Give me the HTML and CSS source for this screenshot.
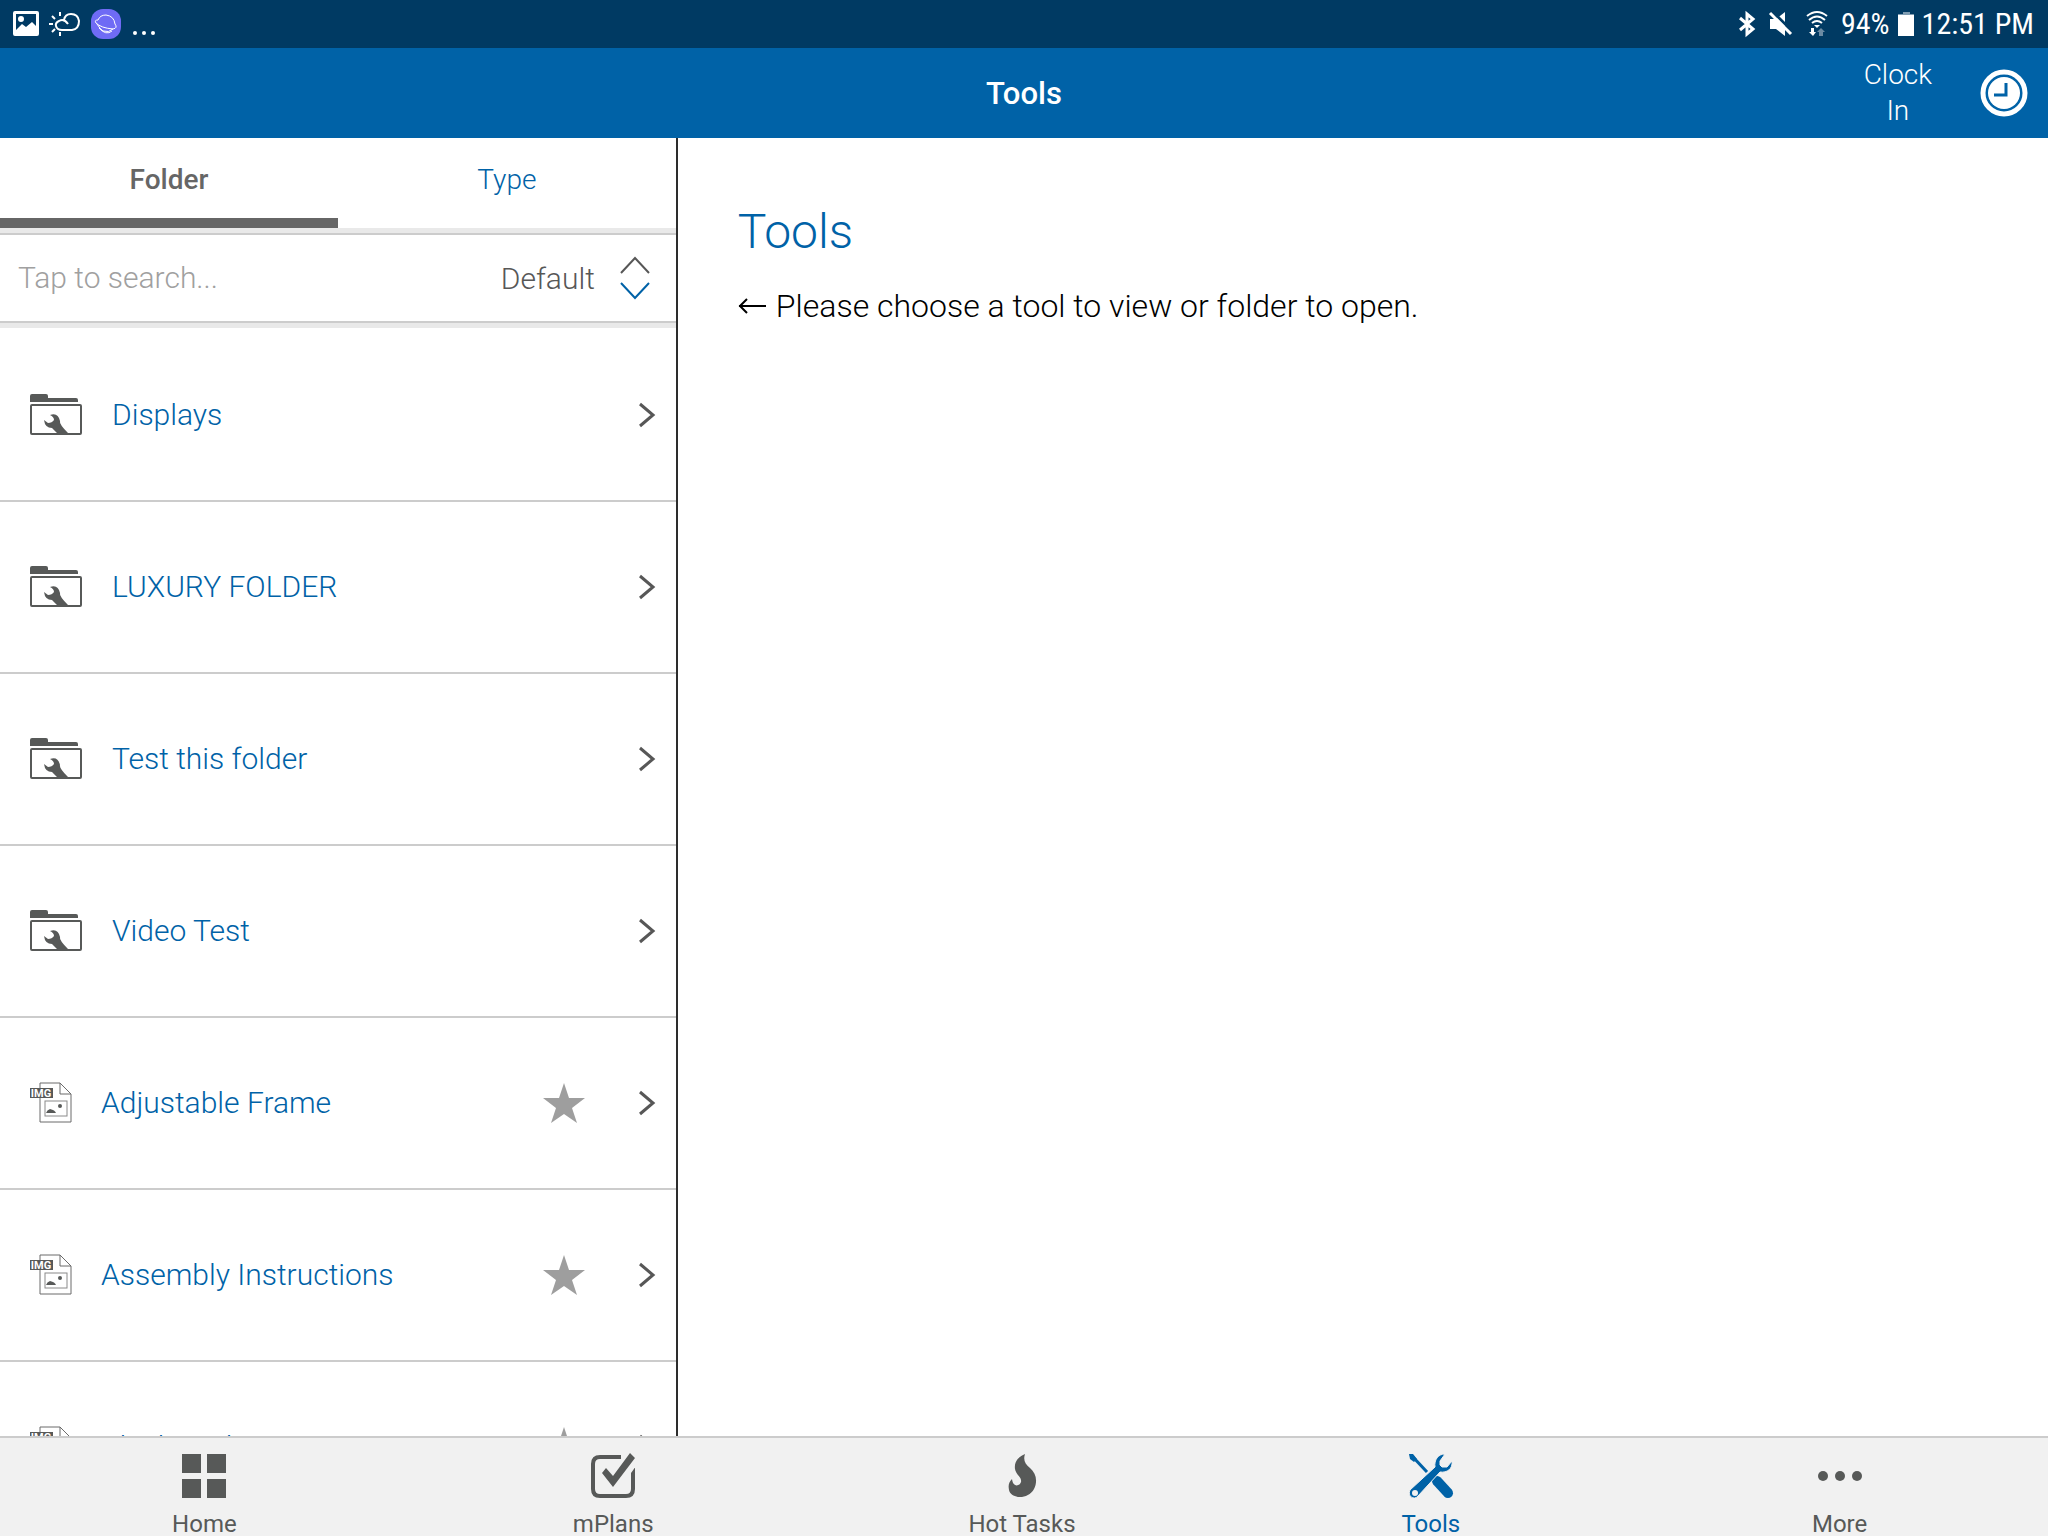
FILE: index.html
```html
<!DOCTYPE html>
<html lang="en">

<head>
    <meta charset="UTF-8">
    <meta name="viewport" content="width=device-width, initial-scale=1">
    <title>Tools</title>
    <link rel="stylesheet" href="styles.css">
</head>

<body>
    <!-- Shared icons -->
    <svg class="sprite" aria-hidden="true">
        <symbol id="icon-folder" viewBox="0 0 52 42">
            <path d="M0 8V2Q0 0 2 0H16Q18 0 18 2V4H46Q48 4 48 6V8Z" fill="#575958" />
            <rect x="1" y="11" width="50" height="29" rx="1" fill="none" stroke="#575958" stroke-width="2" />
            <path d="M20 21Q28 18 30 27Q29 30 38 39H27L22 34Q15 34 14 26L18 29Q22 29 24 26Q24 23 20 21Z" fill="#575958" />
        </symbol>
        <symbol id="icon-img" viewBox="0 0 42 42">
            <path d="M10 1H30L41 12V40H10Z M30 1V12H41" fill="none" stroke="#6b6b6b" stroke-width="1" />
            <rect x="15" y="19" width="22" height="15" fill="none" stroke="#8a8a8a" stroke-width="1" />
            <path d="M16 31Q17 28 20 27Q25 28 26 31Z" fill="#575958" />
            <circle cx="30" cy="24" r="2" fill="#575958" />
            <rect x="0" y="6" width="23" height="10" fill="#575958" />
            <text x="11" y="15" text-anchor="middle" class="img-tag">IMG</text>
        </symbol>
        <symbol id="icon-star" viewBox="0 0 42 40">
            <path d="M21 0L26 15H42L29 25L34 40L21 31L8 40L13 25L0 15H16Z" fill="#9e9e9e" />
        </symbol>
        <symbol id="icon-next" viewBox="0 0 18 26">
            <path d="M2 2L15 13L2 24" fill="none" stroke="#575757" stroke-width="3" />
        </symbol>
    </svg>

    <!-- Device status bar -->
    <div class="status-bar">
        <div class="status-left">
            <svg width="26" height="26" viewBox="0 0 26 26">
                <path fill="#fff" fill-rule="evenodd" d="M2 0H24Q26 0 26 2V23Q26 25 24 25H2Q0 25 0 23V2Q0 0 2 0ZM3 19L9 13L13 16L19 11L23 15V3H3ZM8 5A3 3 0 1 1 8 11A3 3 0 1 1 8 5Z" />
            </svg>
            <svg width="32" height="24" viewBox="0 0 32 24" fill="none" stroke="#fff" stroke-width="2">
                <path d="M19 12Q15 6 10 9Q6 11 7 14Q8 18 13 18H23Q30 17 30 9Q29 2 22 2Q16 2 15 8" />
                <path d="M11 0V4M11 20V24M0 12H4M3 4L6 7M3 20L6 17" />
            </svg>
            <svg width="30" height="30" viewBox="0 0 30 30" fill="none" stroke="#fff" stroke-width="1">
                <rect width="30" height="30" rx="12" fill="#6f6bf5" stroke="none" />
                <path d="M7 11Q9 6 15 6Q23 7 24 15" />
                <path d="M7 11Q3 11 5 14Q10 19 22 20Q27 19 24 15" />
                <path d="M6 15Q9 20 12 22Q18 24 22 20M8 19Q15 27 21 22" />
            </svg>
            <svg width="24" height="24" viewBox="0 0 24 24" fill="#fff">
                <circle cx="4" cy="21" r="2" />
                <circle cx="13" cy="21" r="2" />
                <circle cx="22" cy="21" r="2" />
            </svg>
        </div>
        <div class="status-right">
            <svg width="18" height="26" viewBox="0 0 18 26" fill="none" stroke="#fff" stroke-width="3">
                <path d="M2 7L15 18L9 23V3L15 8L2 19" />
            </svg>
            <svg width="24" height="24" viewBox="0 0 24 24">
                <path d="M1 7H7L16 0V24L7 17H1Z" fill="#fff" />
                <path d="M4 0L24 20" stroke="#003a63" stroke-width="3" />
                <path d="M1 1L22 22" stroke="#fff" stroke-width="3" />
            </svg>
            <svg width="22" height="26" viewBox="0 0 22 26" fill="none" stroke="#fff" stroke-width="2">
                <path d="M1 5Q11 -3 21 5M3 9Q11 2 19 9M6 12Q11 8 16 12" />
                <path d="M8 14H14L11 17Z" fill="#fff" stroke="none" />
                <path d="M5 17H8V21H10L7 25L3 21H5Z" fill="#fff" stroke="none" />
                <path d="M13 25V21H11L15 17L19 21H17V25Z" fill="#6b8aa3" stroke="none" />
            </svg>
            <span class="battery">
                94%
                <svg width="16" height="24" viewBox="0 0 16 24">
                    <path d="M5 0H12V2H16V4H0V2H5Z" fill="#7f9cb1" />
                    <rect y="3" width="16" height="21" fill="#fff" />
                </svg>
                12:51 PM
            </span>
        </div>
    </div>

    <!-- App header -->
    <header class="app-header">
        <h1>Tools</h1>
        <button type="button" class="clock-in">
            <span>Clock<br>In</span>
            <svg width="48" height="48" viewBox="0 0 48 48">
                <circle cx="24" cy="24" r="21" fill="none" stroke="#fff" stroke-width="5" />
                <circle cx="24" cy="24" r="16" fill="#fff" />
                <path d="M26 14V26H14" fill="none" stroke="#0062a7" stroke-width="3" />
            </svg>
        </button>
    </header>

    <main>
        <section class="sidebar">
            <div class="tabs">
                <button type="button" class="tab active">Folder</button>
                <button type="button" class="tab">Type</button>
            </div>
            <div class="search-bar">
                <input type="text" placeholder="Tap to search..." aria-label="Search">
                <button type="button" class="sort">
                    Default
                    <svg width="30" height="42" viewBox="0 0 30 42" fill="none" stroke-width="2">
                        <path d="M1 16L15 1L29 16" stroke="#575757" />
                        <path d="M1 26L15 41L29 26" stroke="#0062a7" />
                    </svg>
                </button>
            </div>

            <ul class="list">
                <li><a href="#">
                    <svg class="folder"><use href="#icon-folder" /></svg>
                    <span class="name">Displays</span>
                    <svg class="next"><use href="#icon-next" /></svg>
                </a></li>
                <li><a href="#">
                    <svg class="folder"><use href="#icon-folder" /></svg>
                    <span class="name">LUXURY FOLDER</span>
                    <svg class="next"><use href="#icon-next" /></svg>
                </a></li>
                <li><a href="#">
                    <svg class="folder"><use href="#icon-folder" /></svg>
                    <span class="name">Test this folder</span>
                    <svg class="next"><use href="#icon-next" /></svg>
                </a></li>
                <li><a href="#">
                    <svg class="folder"><use href="#icon-folder" /></svg>
                    <span class="name">Video Test</span>
                    <svg class="next"><use href="#icon-next" /></svg>
                </a></li>
                <li><a href="#">
                    <svg class="file"><use href="#icon-img" /></svg>
                    <span class="name">Adjustable Frame</span>
                    <svg class="star"><use href="#icon-star" /></svg>
                    <svg class="next"><use href="#icon-next" /></svg>
                </a></li>
                <li><a href="#">
                    <svg class="file"><use href="#icon-img" /></svg>
                    <span class="name">Assembly Instructions</span>
                    <svg class="star"><use href="#icon-star" /></svg>
                    <svg class="next"><use href="#icon-next" /></svg>
                </a></li>
                <li><a href="#">
                    <svg class="file"><use href="#icon-img" /></svg>
                    <span class="name">Black Rod</span>
                    <svg class="star"><use href="#icon-star" /></svg>
                    <svg class="next"><use href="#icon-next" /></svg>
                </a></li>
            </ul>
        </section>

        <section class="detail">
            <h2>Tools</h2>
            <p>
                <svg width="28" height="20" viewBox="0 0 28 20" fill="none" stroke="#000" stroke-width="2">
                    <path d="M9 3L2 10L9 17M1 10H28" />
                </svg>
                Please choose a tool to view or folder to open.
            </p>
        </section>
    </main>

    <!-- Bottom navigation -->
    <nav class="bottom-nav">
        <a href="#">
            <svg width="44" height="44" viewBox="0 0 44 44" fill="currentColor">
                <path d="M0 0H19V19H0ZM25 0H44V19H25ZM0 25H19V44H0ZM25 25H44V44H25Z" />
            </svg>
            Home
        </a>
        <a href="#">
            <svg width="44" height="44" viewBox="0 0 44 44">
                <path d="M30 3H9Q2 3 2 10V35Q2 42 9 42H35Q42 42 42 35V14" fill="none" stroke="currentColor" stroke-width="4" />
                <path d="M39 -1L44 4L22 33L11 19L15 14L22 22Z" fill="currentColor" />
                <path d="M36 -1L31 6M44 11L39 18" stroke="#f1f1f1" stroke-width="3" />
            </svg>
            mPlans
        </a>
        <a href="#">
            <svg width="44" height="44" viewBox="0 0 44 44" fill="currentColor">
                <path d="M25 0C18 3 14 8 15 15C16 21 22 23 21 28C20 32 13 34 12 25C9 28 8 31 9 36C11 45 28 46 34 35C38 27 36 19 30 14C25 10 23 6 25 0Z" />
            </svg>
            Hot Tasks
        </a>
        <a href="#" class="active">
            <svg width="44" height="44" viewBox="0 0 44 44">
                <path d="M3 2L18 18" stroke="currentColor" stroke-width="3" />
                <path d="M0 0L4 0L8 5L5 8L1 5Z" fill="currentColor" />
                <path d="M28 27L39 39" stroke="currentColor" stroke-width="10" stroke-linecap="round" />
                <path d="M36 0C29 0 25 6 26 13L1 36C-2 42 5 47 9 42L31 18C38 19 44 15 43 7L38 13H33L31 11V7Z" fill="currentColor" stroke="#f1f1f1" stroke-width="1" />
                <circle cx="6" cy="39" r="3" fill="#f1f1f1" />
            </svg>
            Tools
        </a>
        <a href="#">
            <svg width="44" height="44" viewBox="0 0 44 44" fill="currentColor">
                <circle cx="5" cy="22" r="5" />
                <circle cx="22" cy="22" r="5" />
                <circle cx="39" cy="22" r="5" />
            </svg>
            More
        </a>
    </nav>
</body>

</html>
```
FILE: styles.css
```css
* {
    box-sizing: border-box;
}

body {
    margin: 0;
    height: 100vh;
    display: flex;
    flex-direction: column;
    overflow: hidden;
    font-family: Roboto, Arial, sans-serif;
    font-size: 30px;
    font-weight: 300;
    background: #fff;
}

svg {
    flex: none;
    overflow: visible;
}

button,
input {
    border: 0;
    padding: 0;
    background: none;
    font: inherit;
}

a {
    color: #0062a7;
    text-decoration: none;
}

.sprite {
    position: absolute;
    width: 0;
    height: 0;
}

/* Status bar */
.status-bar {
    flex: none;
    height: 48px;
    padding: 0 14px 0 13px;
    display: flex;
    justify-content: space-between;
    background: #003a63;
    color: #fff;
}

.status-left,
.status-right,
.battery {
    display: flex;
    align-items: center;
}

.status-left {
    gap: 10px;
}

.status-right {
    font-family: "Roboto Condensed", Roboto, sans-serif;
    font-weight: 400;
    line-height: 44px;
    gap: 13px;
}

.battery {
    gap: 8px;
}

/* Header */
.app-header {
    flex: none;
    height: 90px;
    padding: 0 20px;
    display: grid;
    grid-template-columns: 1fr auto 1fr;
    align-items: center;
    background: #0062a7;
    color: #fff;
}

.app-header h1 {
    grid-column: 2;
    margin: 0;
    font-size: 31px;
    font-weight: 500;
}

.clock-in {
    justify-self: end;
    display: flex;
    align-items: center;
    gap: 48px;
    color: #fff;
    font-size: 28px;
    line-height: 36px;
}

/* Main area */
main {
    flex: 1;
    min-height: 0;
    display: flex;
}

.sidebar {
    box-sizing: content-box;
    width: 33%;
    min-width: 0;
    display: flex;
    flex-direction: column;
    border-right: 2px solid #2d2d2d;
}

.tabs {
    flex: none;
    display: flex;
    height: 95px;
    border-bottom: 5px solid #e9e9e9;
}

.tab {
    flex: 1;
    padding-top: 2px;
    border-bottom: 10px solid transparent;
    color: #0062a7;
    font-size: 28px;
}

.tab.active {
    color: #666;
    font-weight: 500;
    border-bottom-color: #666;
}

.search-bar {
    flex: none;
    height: 90px;
    padding: 0 26px 0 18px;
    display: flex;
    align-items: center;
    border-top: 2px solid #ccc;
    border-bottom: 2px solid #ccc;
}

.search-bar input {
    flex: 1;
    min-width: 0;
    padding-bottom: 2px;
}

.search-bar input::placeholder {
    color: #a0a0a0;
}

.sort {
    display: flex;
    align-items: center;
    gap: 25px;
    color: #575757;
}

.list {
    flex: 1;
    min-height: 0;
    margin: 0;
    padding: 2px 0 0;
    list-style: none;
    border-top: 5px solid #e9e9e9;
    overflow-y: auto;
    scrollbar-width: none;
}

.list a {
    height: 172px;
    padding: 0 20px 0 30px;
    display: flex;
    align-items: center;
    border-bottom: 2px solid #ccc;
}

.name {
    flex: 1;
    padding-bottom: 2px;
}

.folder {
    width: 52px;
    height: 42px;
    margin-right: 30px;
}

.file {
    width: 42px;
    height: 42px;
    margin-right: 29px;
}

.img-tag {
    fill: #fff;
    font-family: Roboto, sans-serif;
    font-size: 11px;
    font-weight: 700;
}

.star {
    width: 42px;
    height: 40px;
    margin-right: 53px;
}

.next {
    width: 18px;
    height: 26px;
}

.detail {
    flex: 1;
    padding: 64px 60px;
}

.detail h2 {
    margin: 0 0 24px;
    color: #0062a7;
    font-size: 48px;
    font-weight: 300;
    line-height: 60px;
}

.detail p {
    margin: 0;
    display: flex;
    align-items: center;
    gap: 10px;
    font-size: 32px;
    line-height: 40px;
}

/* Bottom navigation */
.bottom-nav {
    flex: none;
    height: 100px;
    padding-right: 4px;
    display: flex;
    border-top: 2px solid #ccc;
    background: #f1f1f1;
}

.bottom-nav a {
    flex: 1 1 0;
    padding-top: 16px;
    display: flex;
    flex-direction: column;
    align-items: center;
    gap: 12px;
    color: #575958;
    font-size: 24px;
    font-weight: 400;
    line-height: 28px;
}

.bottom-nav a.active {
    color: #0062a7;
}
```
